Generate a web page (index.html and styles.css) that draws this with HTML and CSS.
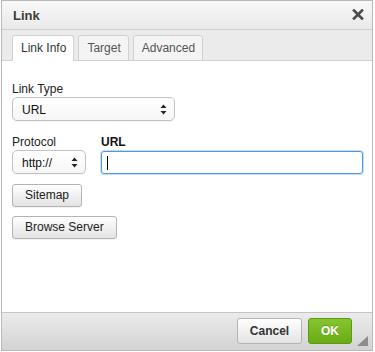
FILE: index.html
```html
<!DOCTYPE html>
<html>
<head>
<meta charset="utf-8">
<link rel="stylesheet" href="styles.css">
</head>
<body>
<div class="dialog">
  <div class="titlebar">
    <span class="title">Link</span>
    <svg class="close" width="12" height="11" viewBox="0 0 12 11"><path d="M2 1.5 L10 9.5 M10 1.5 L2 9.5" stroke="#4a4a4a" stroke-width="2.6" stroke-linecap="square"/></svg>
  </div>
  <div class="tabs">
    <div class="tab active">Link Info</div>
    <div class="tab">Target</div>
    <div class="tab">Advanced</div>
  </div>
  <div class="content">
    <div class="field">
      <div class="label">Link Type</div>
      <div class="select wide"><span>URL</span>
        <svg class="arrows" width="7" height="11" viewBox="0 0 7 11"><path d="M3.5 0.5 L6.5 4 L0.5 4 Z M0.5 7 L6.5 7 L3.5 10.5 Z" fill="#222"/></svg>
      </div>
    </div>
    <div class="row">
      <div class="field">
        <div class="label">Protocol</div>
        <div class="select narrow"><span>http://</span>
          <svg class="arrows" width="7" height="11" viewBox="0 0 7 11"><path d="M3.5 0.5 L6.5 4 L0.5 4 Z M0.5 7 L6.5 7 L3.5 10.5 Z" fill="#222"/></svg>
        </div>
      </div>
      <div class="field grow">
        <div class="label bold">URL</div>
        <div class="input"><span class="caret"></span></div>
      </div>
    </div>
    <div class="btnrow"><span class="btn">Sitemap</span></div>
    <div class="btnrow second"><span class="btn">Browse Server</span></div>
  </div>
  <div class="footer">
    <span class="fbtn cancel">Cancel</span>
    <span class="fbtn ok">OK</span>
    <svg class="grip" width="11" height="10" viewBox="0 0 11 10"><path d="M11 0 L11 10 L0 10 Z" fill="#8c8c8c"/></svg>
  </div>
</div>
</body>
</html>
```
FILE: styles.css
```css
* { box-sizing: border-box; }
html, body { margin: 0; padding: 0; background: #fff; }
body { font-family: "Liberation Sans", Arial, sans-serif; font-size: 12px; color: #222; }

.dialog {
  margin-left: 1px;
  width: 372px;
  height: 351px;
  border: 1px solid #b9b9b9;
  display: flex;
  flex-direction: column;
  background: #fff;
}

.titlebar {
  height: 29px;
  flex: none;
  border-bottom: 1px solid #cfcfcf;
  background: linear-gradient(#f8f8f8, #e9e9e9);
  display: flex;
  align-items: center;
  justify-content: space-between;
  padding: 0 8px 0 11px;
}
.title {
  font-size: 13px;
  font-weight: bold;
  color: #3a3a3a;
  line-height: 28px;
  padding-top: 1px;
  text-shadow: 0 1px 0 rgba(255,255,255,.75);
}
.close { display: block; margin-top: -1px; }

.tabs {
  height: 31px;
  flex: none;
  background: #ebebeb;
  border-bottom: 1px solid #d1d1d1;
  padding: 5px 0 0 10px;
  display: flex;
  gap: 4px;
}
.tab {
  height: 26px;
  margin-bottom: -1px;
  border: 1px solid #d1d1d1;
  border-radius: 3px 3px 0 0;
  background: #f4f4f4;
  color: #555;
  line-height: 24px;
  padding: 0 7px 0 8px;
}
.tab.active {
  background: #fff;
  border-bottom-color: #fff;
  color: #333;
}

.content {
  flex: 1;
  padding: 21px 9px 0 10px;
  background: #fff;
}
.label { line-height: 15px; color: #222; }
.label.bold { font-weight: bold; color: #111; }

.select {
  height: 24px;
  border: 1px solid #c2c2c2;
  border-radius: 5px;
  background: linear-gradient(#ffffff, #f6f6f6);
  box-shadow: 0 1px 0 rgba(0,0,0,.04);
  display: flex;
  align-items: center;
  justify-content: space-between;
  padding: 0 7px 0 9px;
  color: #111;
}
.select span { line-height: 20px; padding-top: 1px; }
.select.wide { width: 163px; }
.select.narrow { width: 74px; }
.arrows { display: block; }

.row {
  display: flex;
  gap: 15px;
  margin-top: 14px;
}
.grow { flex: 1; }
.input {
  height: 23px;
  margin-top: 1px;
  border: 1px solid #4a97e6;
  border-radius: 3px;
  box-shadow: 0 0 0 1px rgba(90,160,235,.35);
  display: flex;
  align-items: center;
  padding-left: 5px;
}
.caret { width: 1px; height: 14px; background: #000; }

.btnrow { margin-top: 10px; display: flex; }
.btnrow.second { margin-top: 9px; }
.btn {
  height: 23px;
  line-height: 21px;
  padding: 0 12px;
  border: 1px solid #b3b3b3;
  border-radius: 3px;
  background: linear-gradient(#ffffff, #e3e3e3);
  color: #222;
  box-shadow: 0 1px 0 rgba(0,0,0,.05);
}

.footer {
  height: 38px;
  flex: none;
  border-top: 1px solid #c4c4c4;
  background: linear-gradient(#ebebeb, #d3d3d3);
  display: flex;
  justify-content: flex-end;
  align-items: flex-start;
  gap: 6px;
  padding: 5px 20px 0 0;
  position: relative;
}
.fbtn {
  height: 26px;
  line-height: 24px;
  border-radius: 3px;
  font-weight: bold;
  font-size: 12px;
  text-align: center;
}
.cancel {
  width: 65px;
  border: 1px solid #b4b4b4;
  background: linear-gradient(#ffffff, #e4e4e4);
  color: #333;
}
.ok {
  width: 44px;
  border: 1px solid #5c9a10;
  background: linear-gradient(#86c530, #69ab15);
  color: #fff;
  text-shadow: 0 -1px 0 rgba(0,0,0,.2);
}
.grip {
  position: absolute;
  right: 4px;
  bottom: 4px;
}
```
